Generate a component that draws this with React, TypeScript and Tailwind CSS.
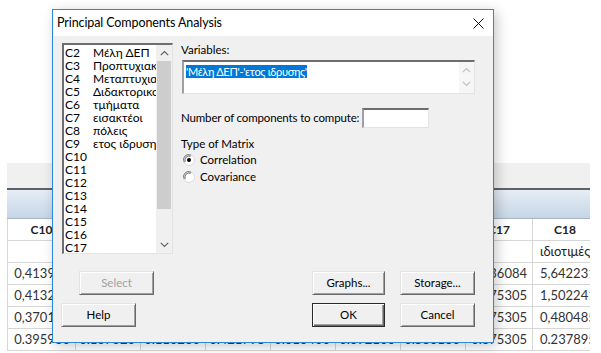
import React from "react";

const listItems: [string, string][] = [
  ["C2", "Μέλη ΔΕΠ"],
  ["C3", "Προπτυχιακοί"],
  ["C4", "Μεταπτυχιακοί"],
  ["C5", "Διδακτορικοί"],
  ["C6", "τμήματα"],
  ["C7", "εισακτέοι"],
  ["C8", "πόλεις"],
  ["C9", "ετος ιδρυσης"],
  ["C10", ""],
  ["C11", ""],
  ["C12", ""],
  ["C13", ""],
  ["C14", ""],
  ["C15", ""],
  ["C16", ""],
  ["C17", ""],
];

const colWidths = [69, 65, 65, 65, 65, 65, 65, 67, 65];
const headers = ["C10", "", "", "", "", "", "", "C17", "C18"];
const names = ["", "", "", "", "", "", "", "", "ιδιοτιμές"];
const rows = [
  ["0,413961", "", "", "", "", "", "", "0,936084", "5,642231"],
  ["0,413245", "", "", "", "", "", "", "0,875305", "1,502241"],
  ["0,370187", "", "", "", "", "", "", "0,875305", "0,480485"],
  ["0.395930", "0.107320", "0.110280", "0.421795", "0.613400", "0.692100", "0.586130", "0.875305", "0.237895"],
];

function Chevron({ up, color = "#606060" }: { up?: boolean; color?: string }) {
  return (
    <svg width="9" height="6" viewBox="0 0 9 6">
      <path
        d={up ? "M0.8 5.2 L4.5 1.5 L8.2 5.2" : "M0.8 0.8 L4.5 4.5 L8.2 0.8"}
        fill="none"
        stroke={color}
        strokeWidth="1.2"
      />
    </svg>
  );
}

function Radio({ checked }: { checked?: boolean }) {
  return (
    <svg width="12" height="12" viewBox="0 0 12 12">
      <circle cx="6" cy="6" r="5.5" fill="#ffffff" stroke="#d8d8d8" />
      <path d="M1.3 8.2 A5 5 0 0 1 8.2 1.3" fill="none" stroke="#808080" strokeWidth="1" />
      <path d="M2.3 7.6 A4 4 0 0 1 7.6 2.3" fill="none" stroke="#404040" strokeWidth="0.8" />
      {checked && <circle cx="6" cy="6" r="2" fill="#000" />}
    </svg>
  );
}

function Btn({
  label,
  w,
  disabled,
  def,
  className = "",
}: {
  label: string;
  w: string;
  disabled?: boolean;
  def?: boolean;
  className?: string;
}) {
  return (
    <div
      className={`${w} h-[24px] flex items-center justify-center text-[11.5px] bg-[#f0f0f0] ${
        def
          ? "border border-[#2a2a2a] shadow-[inset_1px_1px_0_#ffffff,inset_-1px_-1px_0_#696969,inset_-2px_-2px_0_#a0a0a0]"
          : "border border-t-[#e3e3e3] border-l-[#e3e3e3] border-b-[#696969] border-r-[#696969] shadow-[inset_1px_1px_0_#ffffff,inset_-1px_-1px_0_#a0a0a0]"
      } ${disabled ? "text-[#a0a0a0]" : "text-black"} ${className}`}
    >
      {label}
    </div>
  );
}

function Sheet() {
  return (
    <div className="pt-[163px] pl-[7px]">
      <div className="w-[583px] h-[190px] overflow-hidden">
        <div className="h-[25px] bg-[#f0f0f0]" />
        <div className="h-[2px] bg-[#5f6368]" />
        <div className="h-[29px] bg-gradient-to-b from-[#e6edf5] to-[#c6d5e6] border-b border-[#a9b5c3]" />
        <div className="flex h-[22px] border-b border-[#d6d6d6]">
          {headers.map((h, i) => (
            <div
              key={i}
              style={{ width: colWidths[i] }}
              className={`shrink-0 flex items-center justify-center text-[12px] font-bold text-[#222] border-r border-[#d6d6d6] ${
                i === 0 ? "border-l" : ""
              }`}
            >
              {h}
            </div>
          ))}
        </div>
        <div className="flex h-[22px] border-b border-[#d6d6d6]">
          {names.map((h, i) => (
            <div
              key={i}
              style={{ width: colWidths[i] }}
              className={`shrink-0 flex items-center justify-start text-[13px] text-[#222] border-r border-[#d6d6d6] whitespace-nowrap overflow-hidden pl-[7px] ${
                i === 0 ? "border-l" : ""
              }`}
            >
              {h}
            </div>
          ))}
        </div>
        {rows.map((r, ri) => (
          <div key={ri} className="flex h-[22px] border-b border-[#d6d6d6]">
            {r.map((v, i) => (
              <div
                key={i}
                style={{ width: colWidths[i] }}
                className={`shrink-0 flex items-center text-[13px] text-[#333] border-r border-[#d6d6d6] whitespace-nowrap overflow-hidden ${
                  i === 0 ? "border-l" : ""
                } ${i === 8 ? "justify-start pl-[7px]" : "justify-end pr-[5px]"}`}
              >
                {v}
              </div>
            ))}
          </div>
        ))}
      </div>
    </div>
  );
}

function ListBox() {
  return (
    <div className="w-[111px] h-[211px] bg-white flex border-t-2 border-l-2 border-t-[#6e6e6e] border-l-[#6e6e6e] border-r border-b border-r-[#e3e3e3] border-b-[#e3e3e3] shrink-0">
      <div className="flex-1 overflow-hidden pl-[1px] pt-[1px]">
        {listItems.map(([c, n]) => (
          <div key={c} className="flex h-[13px] leading-[13px] text-[12px] whitespace-nowrap">
            <span className="w-[28px] shrink-0">{c}</span>
            <span>{n}</span>
          </div>
        ))}
      </div>
      <div className="w-[16px] shrink-0 flex flex-col bg-[#f0f0f0]">
        <div className="h-[16px] flex items-center justify-center">
          <Chevron up />
        </div>
        <div className="h-[148px] mx-[1px] bg-[#cdcdcd]" />
        <div className="flex-1" />
        <div className="h-[16px] flex items-center justify-center">
          <Chevron />
        </div>
      </div>
    </div>
  );
}

function Dialog() {
  return (
    <div className="absolute left-[52px] top-[9px] w-[442px] h-[334px] border border-[#2b8ad8] bg-[#f0f0f0] shadow-[3px_3px_12px_rgba(0,0,0,0.22)] flex flex-col">
      <div className="h-[26px] bg-white flex items-center justify-between pl-[4px] pr-[9px] shrink-0">
        <span className="text-[12.5px] tracking-[-0.1px]">Principal Components Analysis</span>
        <svg width="11" height="11" viewBox="0 0 11 11">
          <path d="M0.5 0.5 L10.5 10.5 M10.5 0.5 L0.5 10.5" stroke="#111" strokeWidth="1" />
        </svg>
      </div>
      <div className="flex-1 pl-[9px] pt-[7px] text-[11.5px]">
        <div className="flex">
          <ListBox />
          <div className="ml-[9px] flex flex-col">
            <div className="h-[14px] leading-[14px] -ml-[1px]">Variables:</div>
            <div className="mt-[3px] w-[293px] h-[34px] bg-white flex border-t-2 border-l-2 border-t-[#6e6e6e] border-l-[#a0a0a0] border-r border-b border-r-[#e3e3e3] border-b-[#e3e3e3]">
              <div className="flex-1 pl-[2px] pt-[1px]">
                <span className="inline-block h-[13px] leading-[13px] bg-[#0078d7] text-white text-[11px] tracking-[-0.3px] whitespace-nowrap">
                  'Μέλη ΔΕΠ'-'ετος ιδρυσης'
                </span>
              </div>
              <div className="w-[15px] flex flex-col items-center bg-[#f6f6f6] pt-[5px] gap-[8px]">
                <Chevron up color="#c0c0c0" />
                <Chevron color="#c0c0c0" />
              </div>
            </div>
            <div className="mt-[14px] flex items-center -ml-[1px]">
              <span className="w-[181px] shrink-0 whitespace-nowrap tracking-[-0.15px]">Number of components to compute:</span>
              <div className="w-[67px] h-[20px] bg-white border-t-2 border-l-2 border-t-[#6e6e6e] border-l-[#a0a0a0] border-r border-b border-r-[#e3e3e3] border-b-[#e3e3e3]" />
            </div>
            <div className="mt-[9px] h-[14px] leading-[14px] -ml-[1px]">Type of Matrix</div>
            <div className="mt-[2px] h-[14px] flex items-center gap-[5px] ml-[1px]">
              <Radio checked />
              <span>Correlation</span>
            </div>
            <div className="mt-[3px] h-[14px] flex items-center gap-[5px] ml-[1px]">
              <Radio />
              <span>Covariance</span>
            </div>
          </div>
        </div>
        <div className="mt-[17px] flex">
          <Btn label="Select" w="w-[75px]" disabled className="ml-[17px]" />
          <Btn label="Graphs..." w="w-[73px]" className="ml-[158px]" />
          <Btn label="Storage..." w="w-[75px]" className="ml-[15px]" />
        </div>
        <div className="mt-[8px] flex">
          <Btn label="Help" w="w-[75px]" className="-ml-[1px]" />
          <Btn label="OK" w="w-[73px]" def className="ml-[176px]" />
          <Btn label="Cancel" w="w-[75px]" className="ml-[15px]" />
        </div>
      </div>
    </div>
  );
}

export default function App() {
  return (
    <div className="relative w-[601px] h-[353px] overflow-hidden bg-white font-['Lato','Roboto',sans-serif] text-black">
      <Sheet />
      <Dialog />
    </div>
  );
}
